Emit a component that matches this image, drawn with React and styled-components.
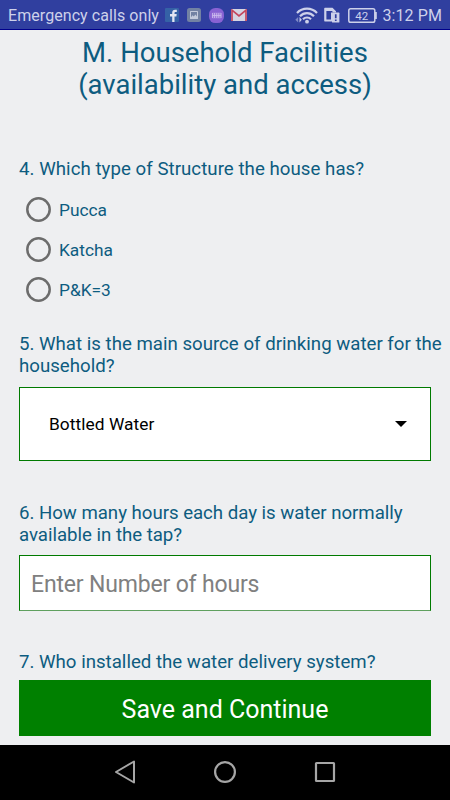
import React from 'react';
import styled, { createGlobalStyle } from 'styled-components';

const STRUCTURES = [
  { id: 'pucca', label: 'Pucca' },
  { id: 'katcha', label: 'Katcha' },
  { id: 'both', label: 'P&K=3' },
];

const GlobalStyle = createGlobalStyle`
  * {
    box-sizing: border-box;
  }

  body {
    margin: 0;
    font-family: Roboto, sans-serif;
  }
`;

const Screen = styled.div`
  display: flex;
  flex-direction: column;
  width: 450px;
  height: 800px;
  overflow: hidden;
  background: #eeeff1;
`;

const StatusBarWrapper = styled.header`
  display: flex;
  justify-content: space-between;
  flex: none;
  height: 30px;
  padding: 0 8px 0 8px;
  background: #303f9f;
  border-bottom: 1px solid #00008b;
  color: #cdd1ea;
`;

const StatusGroup = styled.div`
  display: flex;
  align-items: center;
`;

const StatusText = styled.span`
  margin-top: 2px;
  font-size: 16px;
  line-height: 20px;
  letter-spacing: ${props => props.$spacing || 0}px;
  white-space: nowrap;
`;

const StatusIcon = styled.svg`
  flex: none;
  margin-top: 1px;
  margin-left: ${props => props.$gap}px;
`;

const Form = styled.main`
  flex: 1;
  min-height: 0;
  padding: 7px 0 0 19px;
`;

const Title = styled.h1`
  height: 121px;
  margin: 0 19px 0 0;
  font-size: 27.5px;
  font-weight: 400;
  line-height: 32px;
  text-align: center;
  color: #0d5c80;
`;

const Question = styled.p`
  margin: 0;
  font-size: 18.67px;
  line-height: 22px;
  letter-spacing: ${props => props.$spacing || 0}px;
  white-space: nowrap;
  color: #0d5c80;
`;

const RadioGroup = styled.div`
  height: 153px;
  padding: 10px 0 0 7px;
`;

const RadioLabel = styled.label`
  display: flex;
  align-items: center;
  height: 40px;
  gap: 8px;
  font-size: 17.33px;
  line-height: 22px;
  color: #0d5c80;
`;

const RadioCircle = styled.svg`
  flex: none;
  margin-bottom: 2px;
`;

const SelectBox = styled.div`
  display: flex;
  align-items: center;
  justify-content: space-between;
  width: 412px;
  height: 74px;
  margin: 10px 0 41px;
  padding: 0 23px 0 29px;
  background: #fff;
  border: 1px solid #007a00;
  font-size: 17.33px;
  letter-spacing: .05px;
  color: #000;
`;

const NumberInput = styled.input`
  display: block;
  width: 412px;
  height: 56px;
  margin: 9px 0 40px;
  padding: 3px 11px 0;
  background: #fff;
  border: 1px solid #007a00;
  border-bottom-color: #5fa05f;
  border-radius: 0;
  outline: none;
  font-family: inherit;
  font-size: 23px;
  letter-spacing: -.17px;

  &::placeholder {
    color: #808080;
    opacity: 1;
  }
`;

const SaveButton = styled.button`
  display: block;
  width: 412px;
  height: 56px;
  margin: 7px 0 0;
  padding: 3px 0 0;
  background: #008000;
  border: 0;
  font-family: inherit;
  font-size: 25px;
  color: #fff;
`;

const NavBar = styled.nav`
  display: flex;
  flex: none;
  align-items: center;
  justify-content: center;
  gap: 76px;
  height: 55px;
  padding-bottom: 1px;
  background: #000;
`;

const FacebookIcon = () =>
  <StatusIcon $gap={6} width="14" height="14" viewBox="0 0 14 14">
    <rect width="14" height="14" rx="1" fill="#3562a6" />
    <path d="M7.2 14V8.4H5V6.100h2.200V4.700c0-2 1-3 2.900-3h1.700v2.200h-1.200c-.8 0-1.100 .4-1.100 1.100v1.100h2.200l-.3 2.300H9.500V14z" fill="#e1e5f2" />
  </StatusIcon>

const GalleryIcon = () =>
  <StatusIcon $gap={8} width="14" height="14" viewBox="0 0 14 14">
    <rect width="14" height="14" rx="2.5" fill="#7282a3" />
    <rect x="3" y="3" width="8" height="8" rx=".6" fill="#c3cbdc" />
    <path d="M4 4h6v4.500L8.400 6.500 6.800 8.400 5.600 7.300 4 9.200z" fill="#7282a3" />
  </StatusIcon>

const ImoIcon = () =>
  <StatusIcon $gap={8} width="15" height="15" viewBox="0 0 15 15">
    <rect width="15" height="15" rx="6.3" fill="#8862d3" />
    <rect x="2.8" y="4.4" width="9.6" height="6.2" rx="1.4" fill="#9c7bdb" />
    <path d="M3.5 5v5M5.5 5v5M7.7 5v5M9.8 5v5M12 5v5M3.5 7.5H12" stroke="#cdbdee" strokeWidth=".8" />
  </StatusIcon>

const MailIcon = () =>
  <StatusIcon $gap={7} width="16" height="12" viewBox="0 0 16 12">
    <rect width="16" height="12" rx="1" fill="#d5d5e2" />
    <path d="M1 12V1.200L8 7l7-5.800V12" fill="none" stroke="#c4455c" strokeWidth="1.700" />
  </StatusIcon>

const WifiIcon = () =>
  <StatusIcon $gap={0} width="23" height="17" viewBox="0 0 23 17">
    <g fill="none" stroke="#cdd1ea" strokeWidth="2.2">
      <path d="M2 5.900C7.500 .2 16.500 .2 22 5.900" />
      <path d="M5 9.200C9 5 15 5 19 9.200" />
      <path d="M8 12.300C10.300 9.900 13.700 9.900 16 12.300" />
    </g>
    <circle cx="12" cy="14.700" r="1.900" fill="#cdd1ea" />
    <path d="M3.200 10v5.500L.3 12.750z" fill="#7f89c5" />
    <path d="M4.500 10v5.500L6.800 12.750z" fill="#cdd1ea" />
  </StatusIcon>

const SimIcon = () =>
  <StatusIcon $gap={6} width="16" height="16" viewBox="0 0 16 16">
    <path d="M1 .8h7.500L12 4.200V5.600H8V14.500H1.200C.5 14.500 .2 14.200 .2 13.500V1.600C.2 1.100 .5 .8 1 .8z" fill="#cdd1ea" />
    <path d="M2.400 4h6v1.600H7v6.900H2.400z" fill="#303f9f" />
    <rect x="8" y="5.600" width="7.400" height="10" rx=".6" fill="#cdd1ea" />
    <path d="M10.900 7.300h1.700v4h-1.700zM10.900 12.500h1.700v1.600h-1.700z" fill="#303f9f" />
  </StatusIcon>

const Battery = styled.svg`
  flex: none;
  margin: 1px 5px 0 8px;
  font-size: 11.5px;
`;

const BatteryIcon = ({ level }) =>
  <Battery width="29" height="15" viewBox="0 0 29 15" fill="#cdd1ea">
    <rect x=".8" y=".8" width="26" height="13.400" rx="1.800" fill="none" stroke="#cdd1ea" strokeWidth="1.500" />
    <rect x="27" y="4" width="1.800" height="7" />
    <text x="13.700" y="11.600" textAnchor="middle">{level}</text>
  </Battery>

const StatusBar = () =>
  <StatusBarWrapper>
    <StatusGroup>
      <StatusText $spacing={0.07}>Emergency calls only</StatusText>
      <FacebookIcon />
      <GalleryIcon />
      <ImoIcon />
      <MailIcon />
    </StatusGroup>
    <StatusGroup>
      <WifiIcon />
      <SimIcon />
      <BatteryIcon level={42} />
      <StatusText $spacing={0.1}>3:12 PM</StatusText>
    </StatusGroup>
  </StatusBarWrapper>

const Radio = ({ label }) =>
  <RadioLabel>
    <RadioCircle width="25" height="25" viewBox="0 0 25 25">
      <circle cx="12.5" cy="12.5" r="11.2" fill="none" stroke="#6c6c6c" strokeWidth="2.5" />
    </RadioCircle>
    {label}
  </RadioLabel>

const Navigation = () =>
  <NavBar>
    <svg width="24" height="24" viewBox="0 0 24 24" fill="none" stroke="#a6a6a6" strokeWidth="2">
      <path d="M21 1.500V22.500L3 12z" strokeLinejoin="round" />
    </svg>
    <svg width="24" height="24" viewBox="0 0 24 24" fill="none" stroke="#a6a6a6" strokeWidth="2.2">
      <circle cx="12" cy="12" r="9.900" />
    </svg>
    <svg width="24" height="24" viewBox="0 0 24 24" fill="none" stroke="#a6a6a6" strokeWidth="2.2">
      <rect x="3" y="3" width="18" height="18" rx=".5" />
    </svg>
  </NavBar>

const App = () =>
  <Screen>
    <GlobalStyle />
    <StatusBar />

    <Form>
      <Title>M. Household Facilities<br />(availability and access)</Title>

      <Question $spacing={0.04}>4. Which type of Structure the house has?</Question>
      <RadioGroup>
        {STRUCTURES.map(structure =>
          <Radio key={structure.id} label={structure.label} />
        )}
      </RadioGroup>

      <Question>5. What is the main source of drinking water for the<br />household?</Question>
      <SelectBox>
        Bottled Water
        <svg width="12" height="6" viewBox="0 0 12 6">
          <path d="M0 0h12L6 6z" />
        </svg>
      </SelectBox>

      <Question $spacing={-0.03}>6. How many hours each day is water normally<br />available in the tap?</Question>
      <NumberInput placeholder="Enter Number of hours" />

      <Question>7. Who installed the water delivery system?</Question>
      <SaveButton>Save and Continue</SaveButton>
    </Form>

    <Navigation />
  </Screen>

export default App;
